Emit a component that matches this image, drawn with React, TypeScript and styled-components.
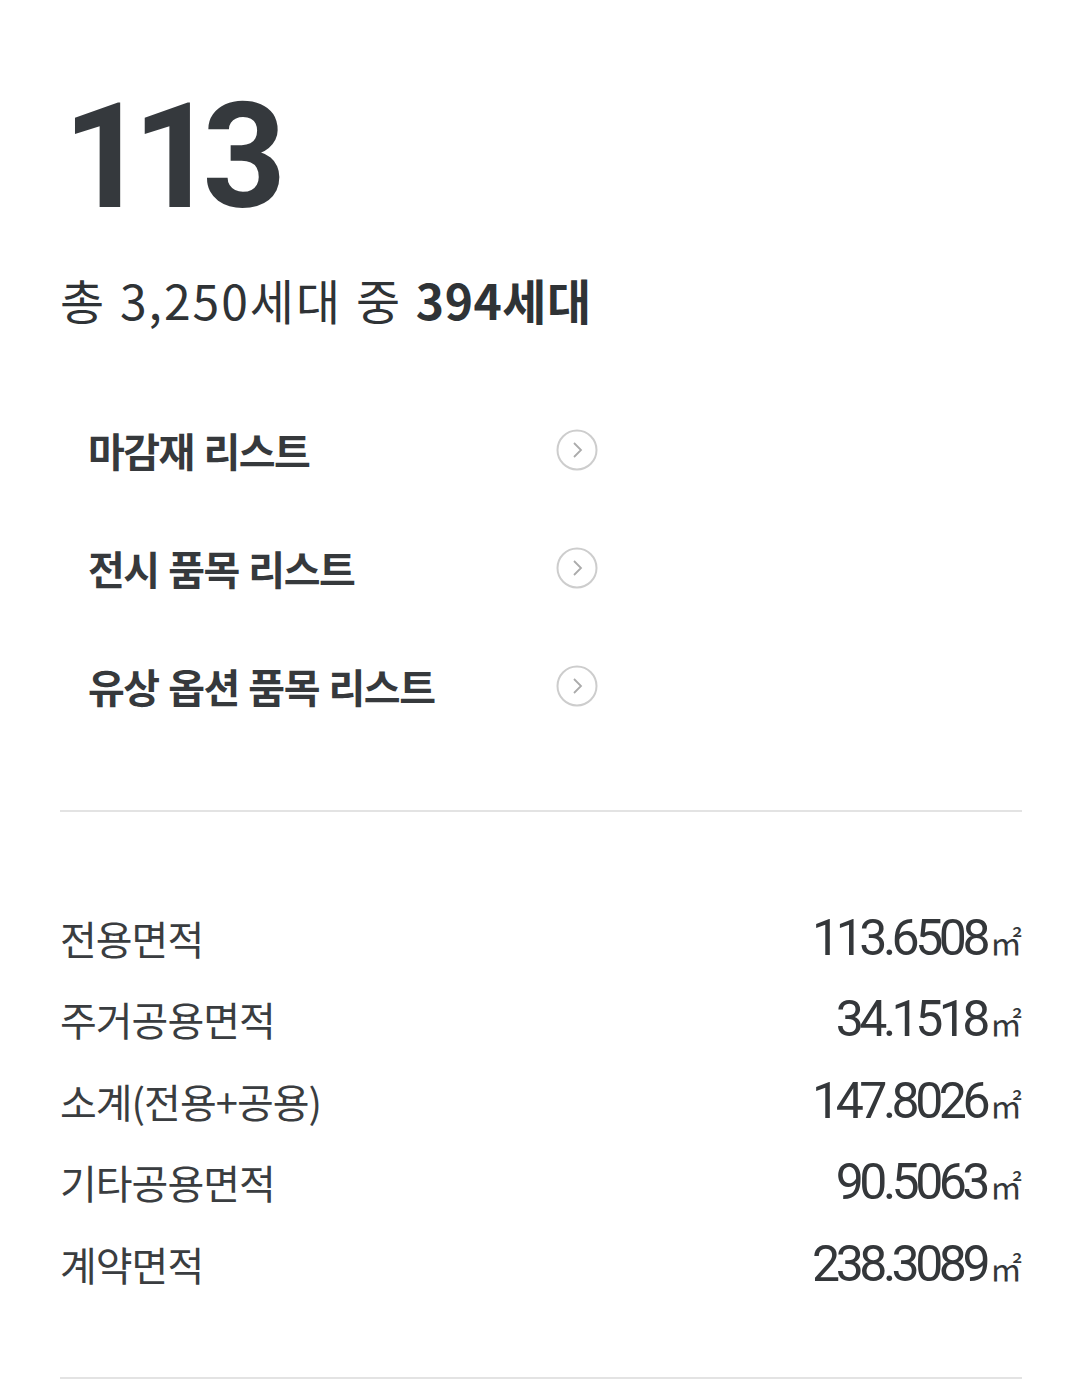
import React from "react";
import styled, { createGlobalStyle } from "styled-components";

const GlobalStyle = createGlobalStyle`
  html, body {
    margin: 0;
    padding: 0;
    background: #ffffff;
  }
  body {
    font-family: "Noto Sans CJK KR", "Noto Sans", sans-serif;
    color: #35393d;
  }
`;

const Page = styled.div`
  width: 1080px;
  box-sizing: border-box;
  padding: 85px 58px 0 60px;
`;

const Hero = styled.div`
  font-family: Roboto, "Noto Sans CJK KR", sans-serif;
  font-weight: 700;
  font-size: 146px;
  line-height: 146px;
  letter-spacing: -14px;
  color: #35393d;
  padding-left: 3px;
`;

const Summary = styled.div`
  margin-top: 38px;
  height: 60px;
  display: flex;
  align-items: center;
  font-size: 48px;
  letter-spacing: 2px;
  word-spacing: 1px;
  color: #2f3336;
  white-space: pre;
`;

const Strong = styled.b`
  font-weight: 700;
  letter-spacing: 0.5px;
`;

const LinkList = styled.ul`
  list-style: none;
  margin: 62px 0 0 0;
  padding: 0 0 0 28px;
  width: 510px;
`;

const LinkRow = styled.li`
  height: 118px;
  display: flex;
  align-items: center;
  justify-content: space-between;
  font-size: 40px;
  font-weight: 700;
  letter-spacing: -1.5px;
  word-spacing: 2px;
  color: #36393c;
`;

const Divider = styled.hr<{ $top: number }>`
  margin: ${(p) => p.$top}px 0 0 0;
  border: none;
  height: 2px;
  background: #e3e3e3;
`;

const AreaTable = styled.dl`
  margin: 85px 0 0 0;
  padding: 0;
`;

const AreaRow = styled.div`
  height: 81.5px;
  display: flex;
  align-items: center;
  justify-content: space-between;
`;

const AreaLabel = styled.dt`
  font-size: 40px;
  font-weight: 400;
  letter-spacing: -1px;
  color: #3a3d40;
`;

const AreaValue = styled.dd`
  margin: 0;
  display: flex;
  align-items: baseline;
  font-family: Roboto, "Noto Sans", sans-serif;
  font-size: 50px;
  letter-spacing: -4.5px;
  color: #34373a;
`;

const Unit = styled.span`
  font-family: "Noto Sans CJK KR", sans-serif;
  font-size: 32px;
  letter-spacing: 0;
  margin-left: 4px;
`;

function ArrowCircle() {
  return (
    <svg width="42" height="42" viewBox="0 0 42 42" aria-hidden="true">
      <circle cx="21" cy="21" r="19.5" fill="none" stroke="#cdcdcd" strokeWidth="2" />
      <path d="M18 14 L25 21 L18 28" fill="none" stroke="#ababab" strokeWidth="1.8" />
    </svg>
  );
}

const links = ["마감재 리스트", "전시 품목 리스트", "유상 옵션 품목 리스트"];

const areas = [
  { label: "전용면적", value: "113.6508" },
  { label: "주거공용면적", value: "34.1518" },
  { label: "소계(전용+공용)", value: "147.8026" },
  { label: "기타공용면적", value: "90.5063" },
  { label: "계약면적", value: "238.3089" },
];

export default function App() {
  return (
    <>
      <GlobalStyle />
      <Page>
        <Hero>113</Hero>
        <Summary>
          총 3,250세대 중 <Strong>394세대</Strong>
        </Summary>
        <LinkList>
          {links.map((l) => (
            <LinkRow key={l}>
              <span>{l}</span>
              <ArrowCircle />
            </LinkRow>
          ))}
        </LinkList>
        <Divider $top={65} />
        <AreaTable>
          {areas.map((a) => (
            <AreaRow key={a.label}>
              <AreaLabel>{a.label}</AreaLabel>
              <AreaValue>
                {a.value}
                <Unit>㎡</Unit>
              </AreaValue>
            </AreaRow>
          ))}
        </AreaTable>
        <Divider $top={72} />
      </Page>
    </>
  );
}
